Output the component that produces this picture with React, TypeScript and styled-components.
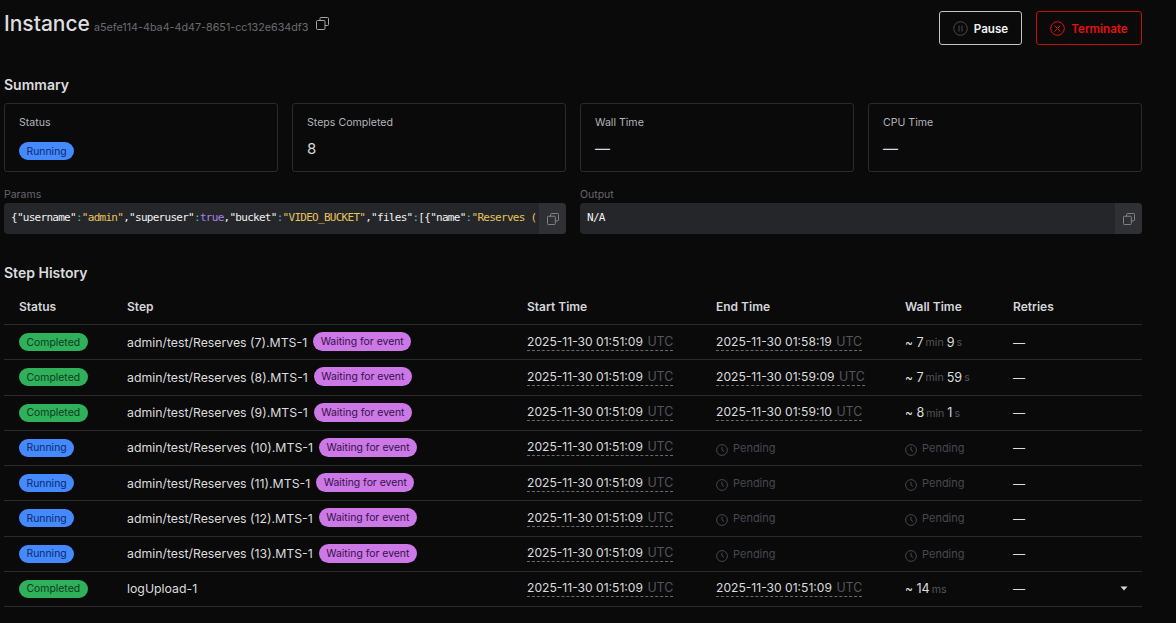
import React from "react";
import styled, { createGlobalStyle } from "styled-components";

const Global = createGlobalStyle`
  html, body { margin: 0; padding: 0; background: #0a0a0b; }
  body { font-family: Inter, "Liberation Sans", sans-serif; color: #e4e4e6; overflow: hidden; }
  * { box-sizing: border-box; }
`;

const Page = styled.div`
  width: 1176px;
  height: 623px;
  padding: 11px 34px 0 4px;
  background: #0a0a0b;
  overflow: hidden;
`;
const Header = styled.header`
  display: flex;
  justify-content: space-between;
  align-items: flex-start;
  height: 34px;
`;
const TitleGroup = styled.div`
  display: flex;
  align-items: center;
  height: 26px;
`;
const Title = styled.h1`
  margin: 0;
  font-size: 21px;
  line-height: 26px;
  font-weight: 500;
  color: #dededf;
`;
const InstanceId = styled.span`
  margin: 6px 0 0 4px;
  font-size: 10.75px;
  color: #6b6b70;
`;
const CopyButton = styled.span`
  display: inline-flex;
  margin: 0 0 2px 8px;
  color: #a6a6aa;
`;
const Actions = styled.div`
  display: flex;
  gap: 14px;
`;
const ActionButton = styled.button<{ $danger?: boolean }>`
  display: flex;
  align-items: center;
  justify-content: center;
  gap: 6px;
  height: 34px;
  width: ${(p) => (p.$danger ? "106px" : "83px")};
  padding: 1px 0 0;
  border-radius: 3px;
  background: transparent;
  border: 1px solid ${(p) => (p.$danger ? "#c80d0d" : "#c4c4c6")};
  color: ${(p) => (p.$danger ? "#e80f0f" : "#f2f2f4")};
  font-family: inherit;
  font-size: 11.6px;
  font-weight: 600;
`;
const SectionTitle = styled.h2<{ $top: number }>`
  margin: ${(p) => p.$top}px 0 0;
  font-size: 14px;
  line-height: 18px;
  font-weight: 600;
  color: #dcdcde;
`;
const Cards = styled.div`
  display: grid;
  grid-template-columns: repeat(4, 274px);
  gap: 14px;
  margin-top: 9px;
`;
const Card = styled.div`
  height: 69px;
  padding: 12px 14px;
  border: 1px solid #2b2b2d;
  border-radius: 3px;
`;
const CardLabel = styled.div`
  font-size: 10.6px;
  line-height: 14px;
  color: #b4b4b8;
`;
const CardValue = styled.div`
  margin-top: 9px;
  font-size: 15px;
  line-height: 20px;
  color: #d8d8da;
`;
const Badge = styled.span<{ $tone: "blue" | "green" | "purple" }>`
  display: inline-flex;
  align-items: center;
  height: ${(p) => (p.$tone === "purple" ? "19px" : "18px")};
  margin-top: ${(p) => (p.$tone === "purple" ? "-1px" : "0")};
  padding: 0 7.5px;
  border-radius: 10px;
  font-size: 10.4px;
  white-space: nowrap;
  background: ${(p) =>
    p.$tone === "blue" ? "#4589ff" : p.$tone === "green" ? "#2fb05a" : "#cc78e6"};
  color: ${(p) =>
    p.$tone === "blue" ? "#0b2a66" : p.$tone === "green" ? "#0c3d1e" : "#35104a"};
`;
const CardBadge = styled.div`
  display: flex;
  margin-top: 12px;
`;
const Fields = styled.div`
  display: grid;
  grid-template-columns: 562px 562px;
  gap: 14px;
  margin-top: 16px;
`;
const FieldLabel = styled.div`
  font-size: 10.5px;
  line-height: 14px;
  color: #66666b;
`;
const CodeBox = styled.div`
  display: flex;
  height: 31px;
  margin-top: 1px;
  border-radius: 4px;
  background: #25262a;
  overflow: hidden;
`;
const Code = styled.code`
  flex: 1;
  min-width: 0;
  padding-left: 7px;
  font-family: "DejaVu Sans Mono", monospace;
  font-size: 11px;
  letter-spacing: -0.72px;
  line-height: 30px;
  white-space: nowrap;
  overflow: hidden;
  color: #f1f1f1;
`;
const Str = styled.span`color: #e6c45c;`;
const Kw = styled.span`color: #a583e8;`;
const Colon = styled.span`color: #5fb8b0;`;
const CodeCopy = styled.div`
  display: flex;
  align-items: center;
  justify-content: center;
  width: 27px;
  background: #2f3034;
  color: #8c8c90;
`;
const Table = styled.div`
  margin-top: 11px;
`;
const Row = styled.div<{ $head?: boolean }>`
  display: grid;
  grid-template-columns: 108px 400px 189px 189px 108px 1fr;
  align-items: center;
  height: ${(p) => (p.$head ? "32px" : "35.25px")};
  border-bottom: 1px solid #2b2b2d;
  font-size: 12.1px;
  color: #dcdcde;
`;
const Th = styled.div`
  padding-left: 15px;
  font-size: 12px;
  font-weight: 600;
  color: #d6d6d8;
  margin-top: -4px;
`;
const Cell = styled.div`
  display: flex;
  align-items: center;
  padding-left: 15px;
  min-width: 0;
`;
const StepName = styled.span`
  margin-right: 6px;
  font-size: 12.3px;
  white-space: nowrap;
`;
const Time = styled.span`
  display: inline-block;
  line-height: 16px;
  border-bottom: 1px dashed #6a6a6e;
  white-space: nowrap;
`;
const Muted = styled.span`
  margin-left: 1px;
  font-size: 12.4px;
  color: #55555a;
`;
const Num = styled.span`
  font-size: 12.6px;
`;
const Unit = styled.span`
  margin: 1px 3px 0 2px;
  font-size: 10.6px;
  color: #55555a;
`;
const Pending = styled.span`
  display: inline-flex;
  align-items: center;
  gap: 5px;
  font-size: 11px;
  color: #48484d;
`;
const ClockWrap = styled.span`
  display: inline-flex;
  margin-top: 4px;
`;
const RetryCell = styled(Cell)`
  justify-content: space-between;
  padding-right: 14px;
`;
const Caret = styled.svg`
  display: block;
`;

const CopyIcon = ({ size = 13 }: { size?: number }) => (
  <svg width={size} height={size} viewBox="0 0 13 13" fill="none" stroke="currentColor" strokeWidth="1">
    <rect x="0.5" y="3.5" width="8.5" height="9" rx="1" />
    <path d="M4 3.5V1.5a1 1 0 0 1 1-1h6.5a1 1 0 0 1 1 1v6a1 1 0 0 1-1 1H9" />
  </svg>
);
const PauseIcon = () => (
  <svg width="15" height="15" viewBox="0 0 15 15" fill="none" stroke="#4a4a4d" strokeWidth="1">
    <circle cx="7.5" cy="7.5" r="6.8" />
    <path d="M6 4.5v6M9 4.5v6" />
  </svg>
);
const XCircleIcon = () => (
  <svg width="15" height="15" viewBox="0 0 15 15" fill="none" stroke="#e80f0f" strokeWidth="1">
    <circle cx="7.5" cy="7.5" r="6.8" />
    <path d="M4.5 4.5l6 6M10.5 4.5l-6 6" />
  </svg>
);
const ClockIcon = () => (
  <svg width="12" height="12" viewBox="0 0 12 12" fill="none" stroke="#48484d" strokeWidth="1">
    <circle cx="6" cy="6" r="5.4" />
    <path d="M6 2.8V6l2 1.6" />
  </svg>
);

const Stamp = ({ value }: { value: string }) => (
  <Time>
    {value} <Muted>UTC</Muted>
  </Time>
);
const PendingLabel = () => (
  <Pending>
    <ClockWrap><ClockIcon /></ClockWrap>
    Pending
  </Pending>
);

type Step = {
  status: "Completed" | "Running";
  name: string;
  end?: string;
  wall?: [string, string][];
  waiting?: boolean;
  caret?: boolean;
};
const START = "2025-11-30 01:51:09";
const steps: Step[] = [
  { status: "Completed", name: "admin/test/Reserves (7).MTS-1", end: "2025-11-30 01:58:19", wall: [["7", "min"], ["9", "s"]], waiting: true },
  { status: "Completed", name: "admin/test/Reserves (8).MTS-1", end: "2025-11-30 01:59:09", wall: [["7", "min"], ["59", "s"]], waiting: true },
  { status: "Completed", name: "admin/test/Reserves (9).MTS-1", end: "2025-11-30 01:59:10", wall: [["8", "min"], ["1", "s"]], waiting: true },
  { status: "Running", name: "admin/test/Reserves (10).MTS-1", waiting: true },
  { status: "Running", name: "admin/test/Reserves (11).MTS-1", waiting: true },
  { status: "Running", name: "admin/test/Reserves (12).MTS-1", waiting: true },
  { status: "Running", name: "admin/test/Reserves (13).MTS-1", waiting: true },
  { status: "Completed", name: "logUpload-1", end: "2025-11-30 01:51:09", wall: [["14", "ms"]], caret: true },
];

const summary = [
  ["Steps Completed", "8"],
  ["Wall Time", "—"],
  ["CPU Time", "—"],
];

export default function App() {
  return (
    <Page>
      <Global />
      <Header>
        <TitleGroup>
          <Title>Instance</Title>
          <InstanceId>a5efe114-4ba4-4d47-8651-cc132e634df3</InstanceId>
          <CopyButton><CopyIcon /></CopyButton>
        </TitleGroup>
        <Actions>
          <ActionButton><PauseIcon />Pause</ActionButton>
          <ActionButton $danger><XCircleIcon />Terminate</ActionButton>
        </Actions>
      </Header>

      <SectionTitle $top={31}>Summary</SectionTitle>
      <Cards>
        <Card>
          <CardLabel>Status</CardLabel>
          <CardBadge><Badge $tone="blue">Running</Badge></CardBadge>
        </Card>
        {summary.map(([label, value]) => (
          <Card key={label}>
            <CardLabel>{label}</CardLabel>
            <CardValue>{value}</CardValue>
          </Card>
        ))}
      </Cards>

      <Fields>
        <div>
          <FieldLabel>Params</FieldLabel>
          <CodeBox>
            <Code>
              {'{"username"'}<Colon>:</Colon><Str>"admin"</Str>{',"superuser"'}<Colon>:</Colon><Kw>true</Kw>{',"bucket"'}<Colon>:</Colon><Str>"VIDEO_BUCKET"</Str>{',"files"'}<Colon>:</Colon>{'[{"name"'}<Colon>:</Colon><Str>"Reserves (</Str>
            </Code>
            <CodeCopy><CopyIcon size={12} /></CodeCopy>
          </CodeBox>
        </div>
        <div>
          <FieldLabel>Output</FieldLabel>
          <CodeBox>
            <Code>N/A</Code>
            <CodeCopy><CopyIcon size={12} /></CodeCopy>
          </CodeBox>
        </div>
      </Fields>

      <SectionTitle $top={30}>Step History</SectionTitle>
      <Table>
        <Row $head>
          <Th>Status</Th>
          <Th>Step</Th>
          <Th>Start Time</Th>
          <Th>End Time</Th>
          <Th>Wall Time</Th>
          <Th>Retries</Th>
        </Row>
        {steps.map((s) => (
          <Row key={s.name}>
            <Cell><Badge $tone={s.status === "Running" ? "blue" : "green"}>{s.status}</Badge></Cell>
            <Cell>
              <StepName>{s.name}</StepName>
              {s.waiting && <Badge $tone="purple">Waiting for event</Badge>}
            </Cell>
            <Cell><Stamp value={START} /></Cell>
            <Cell>{s.end ? <Stamp value={s.end} /> : <PendingLabel />}</Cell>
            <Cell>
              {s.wall ? (
                <>
                  <span>~&nbsp;</span>
                  {s.wall.map(([n, u]) => (
                    <React.Fragment key={u}>
                      <Num>{n}</Num>
                      <Unit>{u}</Unit>
                    </React.Fragment>
                  ))}
                </>
              ) : (
                <PendingLabel />
              )}
            </Cell>
            <RetryCell>
              <span>—</span>
              {s.caret && (
                <Caret width="8" height="5" viewBox="0 0 8 5">
                  <path d="M0.5 0.5h7L4 4.5z" fill="#d8d8da" />
                </Caret>
              )}
            </RetryCell>
          </Row>
        ))}
      </Table>
    </Page>
  );
}
